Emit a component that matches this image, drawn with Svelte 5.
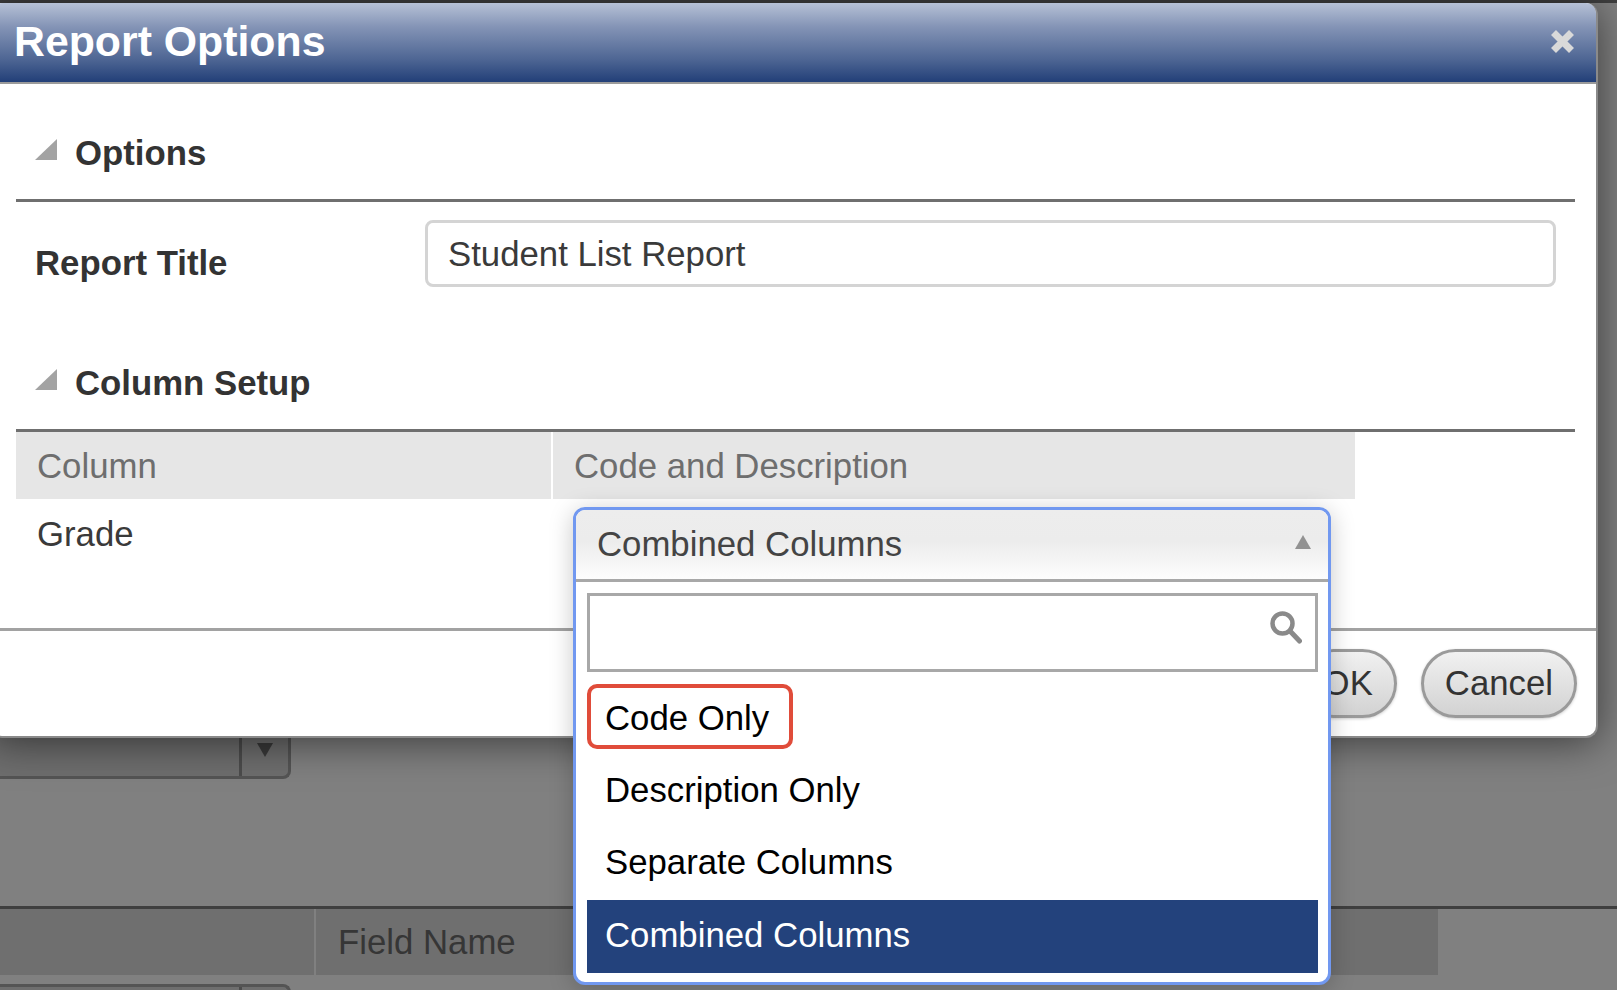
<script>
  const options = ["Code Only", "Description Only", "Separate Columns", "Combined Columns"];
  const selected = "Combined Columns";
</script>

<div class="page">
  <div class="backdrop">
    <div class="bg-select"><span class="bg-arrow"><i class="down"></i></span></div>
    <div class="bg-head">
      <div class="bg-cell first"></div>
      <div class="bg-cell second">Field Name</div>
    </div>
    <div class="bg-select next"><span class="bg-arrow"></span></div>
  </div>

  <section class="dialog">
    <header class="titlebar">
      <h1>Report Options</h1>
      <svg class="close" viewBox="0 0 25 25" width="25" height="25" aria-label="Close">
        <path d="M3.5 3.5 21.5 21.5M21.5 3.5 3.5 21.5" stroke="#d9d9d9" stroke-width="7" fill="none" />
      </svg>
    </header>

    <div class="body">
      <div class="section-head options-head">
        <svg viewBox="0 0 22 21" width="22" height="21"><path d="M22 0V21H0Z" fill="#a3a3a3" /></svg>
        <h2>Options</h2>
      </div>
      <div class="title-row">
        <span class="label">Report Title</span>
        <div class="input">Student List Report</div>
      </div>

      <div class="section-head column-head">
        <svg viewBox="0 0 22 21" width="22" height="21"><path d="M22 0V21H0Z" fill="#a3a3a3" /></svg>
        <h2>Column Setup</h2>
      </div>
      <div class="table-head">
        <div class="th col-a">Column</div>
        <div class="th col-b">Code and Description</div>
      </div>
      <div class="table-row">Grade</div>
    </div>

    <footer class="footer">
      <button class="pill">OK</button>
      <button class="pill">Cancel</button>
    </footer>
  </section>

  <div class="dropdown">
    <div class="dd-head">
      <span>Combined Columns</span>
      <svg viewBox="0 0 16 14" width="16" height="14"><path d="M8 0 16 14H0Z" fill="#929292" /></svg>
    </div>
    <div class="dd-body">
      <div class="search">
        <svg viewBox="0 0 32 33" width="32" height="33">
          <circle cx="12.5" cy="12.5" r="10" fill="none" stroke="#8a8a8a" stroke-width="4.5" />
          <path d="M20 20 29.5 30" stroke="#8a8a8a" stroke-width="5" stroke-linecap="round" fill="none" />
        </svg>
      </div>
      <ul>
        {#each options as o, i}
          <li class:active={o === selected} class:marked={i === 0}><span>{o}</span></li>
        {/each}
      </ul>
    </div>
  </div>
</div>

<style>
  :global(body) {
    margin: 0;
    background: #808080;
  }
  .page {
    position: relative;
    width: 1617px;
    height: 990px;
    overflow: hidden;
    background: #808080;
    font-family: "Liberation Sans", Arial, sans-serif;
    font-size: 34.75px;
    color: #333;
  }
  .backdrop {
    border-top: 3px solid #3f3f3f;
    padding-top: 731px;
  }
  .bg-select {
    box-sizing: border-box;
    width: 301px;
    height: 45px;
    margin-left: -10px;
    border: 3px solid #545454;
    border-top: 0;
    border-radius: 0 0 8px 8px;
    background: #6e6e6e;
    display: flex;
    justify-content: flex-end;
  }
  .bg-select.next {
    height: 30px;
    margin-top: 9px;
    border: 3px solid #545454;
    border-bottom: 0;
    border-radius: 8px 8px 0 0;
  }
  .bg-arrow {
    width: 49px;
    border-left: 3px solid #4c4c4c;
    display: flex;
    justify-content: center;
    padding-top: 9px;
    box-sizing: border-box;
  }
  .down {
    width: 0;
    height: 0;
    border-left: 8px solid transparent;
    border-right: 8px solid transparent;
    border-top: 14px solid #3a3a3a;
  }
  .bg-head {
    margin-top: 127px;
    border-top: 3px solid #3f3f3f;
    display: flex;
    height: 66px;
    width: 100%;
  }
  .bg-cell {
    background: #6f6f6f;
  }
  .first {
    width: 314px;
    margin-right: 2px;
  }
  .second {
    width: 1100px;
    padding-left: 22px;
    line-height: 66px;
    color: #363636;
  }
  .dialog {
    position: absolute;
    left: -10px;
    top: 3px;
    box-sizing: border-box;
    width: 1608px;
    height: 735px;
    background: #fff;
    border-radius: 12px;
    box-shadow: 0 4px 42px rgba(0, 0, 0, 0.55);
    border-right: 2px solid #8a8a8a;
    border-bottom: 2px solid #8a8a8a;
    display: flex;
    flex-direction: column;
  }
  .titlebar {
    height: 79px;
    flex: none;
    border-radius: 12px 10px 0 0;
    border-bottom: 2px solid #9b9b9b;
    background: linear-gradient(#b6c1d6 0%, #8494b6 30%, #4d6593 72%, #223f78 100%);
    display: flex;
    align-items: center;
    justify-content: space-between;
    padding: 0 21px 0 24px;
  }
  h1 {
    margin: 0 0 3px;
    font-size: 42.8px;
    font-weight: 700;
    color: #fff;
  }
  .close {
    margin-top: -2px;
  }
  .body {
    flex: 1;
    padding: 0 21px 0 26px;
  }
  .section-head {
    box-sizing: border-box;
    display: flex;
    align-items: flex-end;
    gap: 18px;
    padding: 0 0 26px 19px;
    border-bottom: 3px solid #6f6f6f;
  }
  .options-head {
    height: 118px;
  }
  .column-head {
    height: 99px;
  }
  .section-head svg {
    margin-bottom: 13px;
  }
  h2 {
    margin: 0;
    font-size: 34.75px;
    font-weight: 700;
    color: #333;
  }
  .title-row {
    display: flex;
    align-items: flex-start;
    height: 131px;
    padding-left: 19px;
  }
  .label {
    width: 390px;
    font-weight: 700;
    margin-top: 42px;
    color: #333;
  }
  .input {
    box-sizing: border-box;
    width: 1131px;
    height: 67px;
    margin-top: 18px;
    padding-left: 20px;
    line-height: 63px;
    border: 3px solid #d4d4d4;
    border-radius: 8px;
    color: #3a3a3a;
  }
  .table-head {
    display: flex;
    gap: 2px;
    height: 67px;
  }
  .th {
    background: #e6e6e6;
    color: #6e6e6e;
    padding-left: 21px;
    line-height: 68px;
    box-sizing: border-box;
  }
  .col-a {
    width: 535px;
  }
  .col-b {
    width: 802px;
  }
  .table-row {
    padding: 16px 0 0 21px;
    color: #3a3a3a;
  }
  .footer {
    height: 108px;
    flex: none;
    box-sizing: border-box;
    border-top: 3px solid #a2a2a2;
    display: flex;
    justify-content: flex-end;
    gap: 24px;
    padding: 18px 19px 0 0;
  }
  .pill {
    box-sizing: border-box;
    height: 69px;
    padding: 0 21px;
    border: 3px solid #9a9a9a;
    border-radius: 35px;
    background: linear-gradient(#f1f1f1, #d2d2d2);
    font: inherit;
    color: #333;
    box-shadow: 0 1px 3px rgba(0, 0, 0, 0.2);
  }
  .dropdown {
    position: absolute;
    left: 573px;
    top: 507px;
    box-sizing: border-box;
    width: 758px;
    height: 478px;
    border: 3px solid #7198f0;
    border-radius: 12px;
    background: #fff;
    box-shadow: 0 4px 24px rgba(0, 0, 0, 0.22);
    display: flex;
    flex-direction: column;
  }
  .dd-head {
    height: 72px;
    flex: none;
    box-sizing: border-box;
    border-radius: 9px 9px 0 0;
    border-bottom: 3px solid #a8a8a8;
    background: linear-gradient(#ededed 0%, #ececec 45%, #fdfdfd 100%);
    padding: 0 17px 0 21px;
    display: flex;
    align-items: center;
    justify-content: space-between;
    color: #444;
  }
  .dd-head svg {
    margin-top: -5px;
  }
  .dd-body {
    padding: 11px 10px 0 11px;
  }
  .search {
    box-sizing: border-box;
    height: 79px;
    border: 3px solid #a8a8a8;
    display: flex;
    justify-content: flex-end;
    align-items: flex-start;
    padding: 15px 13px 0 0;
  }
  ul {
    list-style: none;
    margin: 12px 0 0;
    padding: 0;
  }
  li {
    box-sizing: border-box;
    height: 72px;
    padding-left: 18px;
    line-height: 68px;
    color: #000;
  }
  li.marked {
    position: relative;
  }
  li.marked::after {
    content: "";
    position: absolute;
    left: 0;
    top: 0;
    box-sizing: border-box;
    width: 206px;
    height: 65px;
    border: 4px solid #e04c3a;
    border-radius: 10px;
  }
  li.active {
    background: #23427c;
    color: #fff;
    height: 73px;
    line-height: 70px;
  }
</style>
